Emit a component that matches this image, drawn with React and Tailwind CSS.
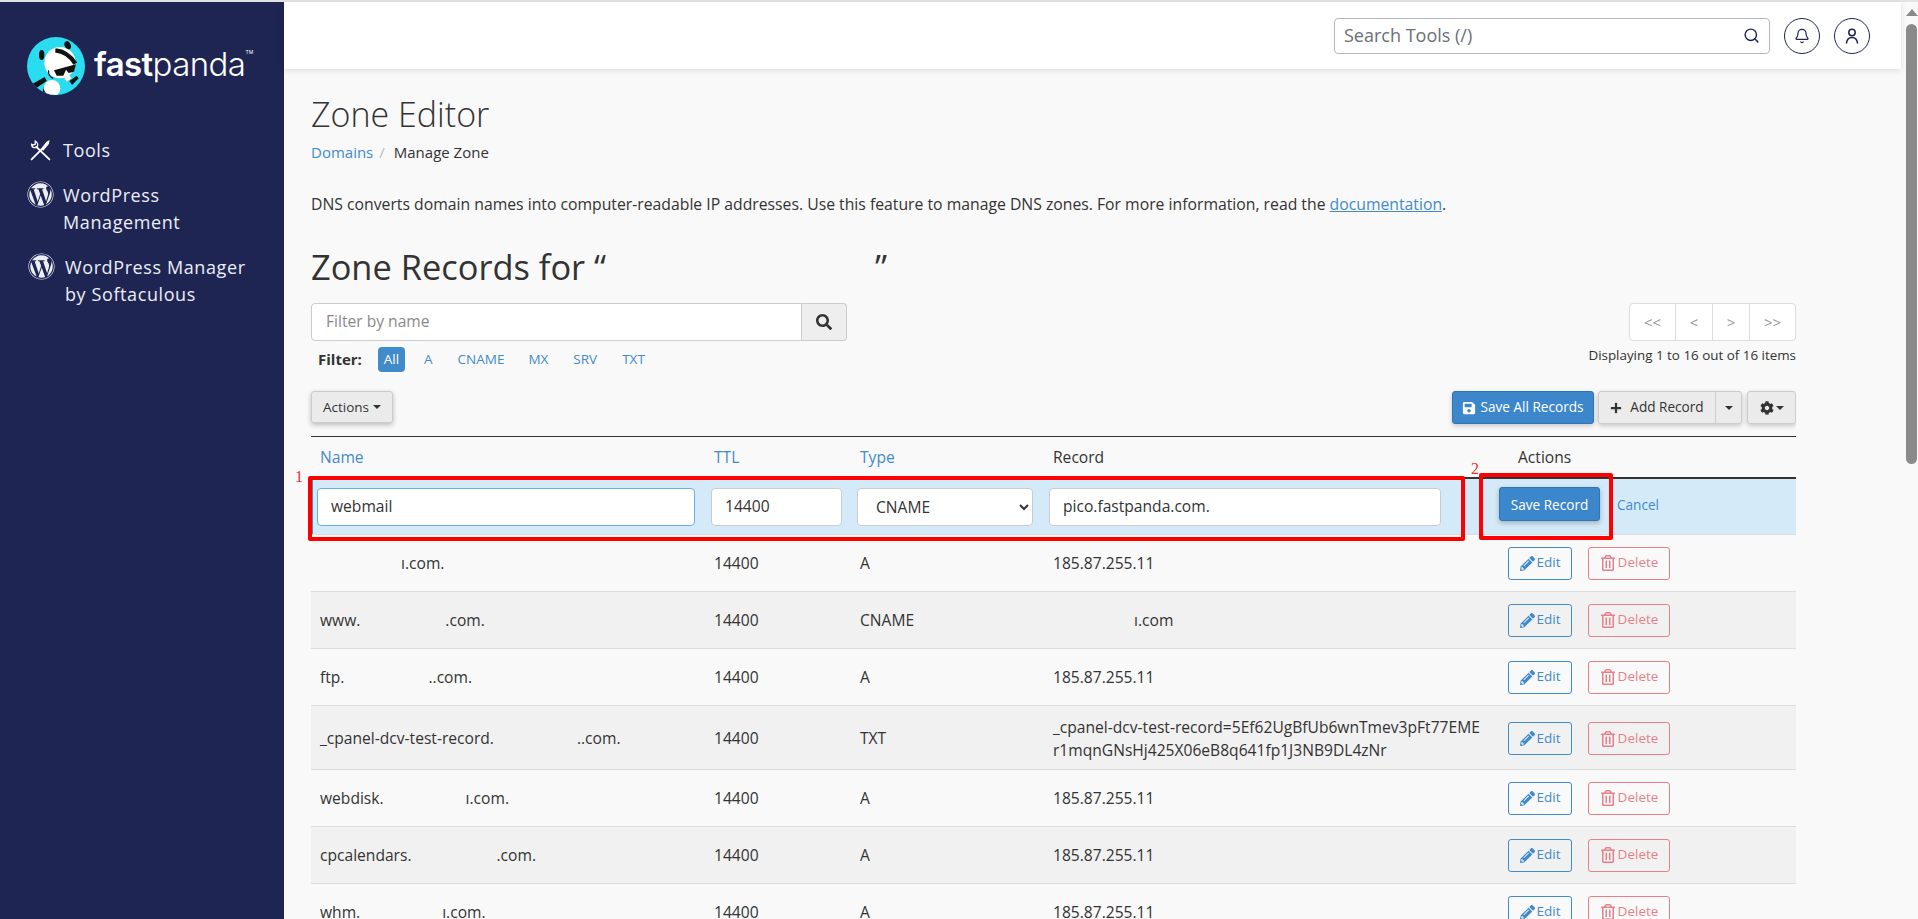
import { Bell, Search } from 'lucide-react';
import { FaCog, FaPencilAlt, FaPlus, FaRegTrashAlt, FaSave, FaSearch, FaWordpress } from 'react-icons/fa';

const rows = [
    { prefix: '', gap: 'ml-[81px]', rest: 'ı.com.', ttl: '14400', type: 'A', record: '185.87.255.11' },
    { prefix: 'www.', gap: 'ml-[85px]', rest: '.com.', ttl: '14400', type: 'CNAME', record: '', recordTail: 'ı.com' },
    { prefix: 'ftp.', gap: 'ml-[84px]', rest: '..com.', ttl: '14400', type: 'A', record: '185.87.255.11' },
    { prefix: '_cpanel-dcv-test-record.', gap: 'ml-[83px]', rest: '..com.', ttl: '14400', type: 'TXT', txt: true },
    { prefix: 'webdisk.', gap: 'ml-[82px]', rest: 'ı.com.', ttl: '14400', type: 'A', record: '185.87.255.11' },
    { prefix: 'cpcalendars.', gap: 'ml-[85px]', rest: '.com.', ttl: '14400', type: 'A', record: '185.87.255.11' },
    { prefix: 'whm.', gap: 'ml-[82px]', rest: 'ı.com.', ttl: '14400', type: 'A', record: '185.87.255.11' },
];

const Logo = () => (
    <svg viewBox="23 18 174 174" className="w-[58px] h-[58px] shrink-0">
        <defs>
            <clipPath id="logo-clip">
                <circle cx="110" cy="105" r="87" />
            </clipPath>
        </defs>
        <circle cx="110" cy="105" r="87" fill="#2adcf0" />
        <g clipPath="url(#logo-clip)">
            <ellipse cx="67" cy="72" rx="8" ry="15" fill="#111" />
            <ellipse cx="145" cy="43" rx="9" ry="13" fill="#111" transform="rotate(-25 145 43)" />
            <ellipse cx="122" cy="95" rx="47" ry="47" fill="#fff" />
            <path d="M108 58 C130 60 152 72 168 98" stroke="#111" strokeWidth="13" fill="none" />
            <path d="M104 118 L170 100 L164 122 L148 126 L140 116 L132 134 L112 134 Z" fill="#111" />
            <path d="M132 135 L146 126 L156 142 L142 152 Z" fill="#fff" />
            <path d="M88 118 C86 128 92 138 102 142" stroke="#111" strokeWidth="4" fill="none" />
            <path d="M40 158 L76 138 L82 150 L50 172 Z" fill="#111" />
            <path d="M150 150 L172 134 L178 142 L158 162 Z" fill="#111" />
            <circle cx="98" cy="172" r="25" fill="#fff" />
            <path d="M72 168 Q76 190 92 196 L70 196 Z" fill="#111" />
        </g>
    </svg>
);

const ToolsIcon = () => (
    <svg viewBox="0 0 20 20" className="w-[21px] h-[21px] shrink-0" fill="none" stroke="#fff" strokeLinecap="round">
        <path d="M6 6.5 L18.5 18.5" strokeWidth="1.8" />
        <path d="M1.5 4 C1.5 7 4 8 6.5 6.8 C8 5 7.5 2.4 5 1 L5 4 L3 4.8 Z" strokeWidth="1.2" />
        <path d="M1.5 18.5 L11.5 8.5" strokeWidth="1.8" />
        <path d="M11 8.5 L16 2 L18 1 L17.5 3.5 L12.5 9.5 Z" fill="#fff" strokeWidth="1" />
    </svg>
);

const UserIcon = () => (
    <svg viewBox="0 0 14 16" className="w-[14px] h-[16px]" fill="none" stroke="#1f2553" strokeWidth="1.5" strokeLinecap="round">
        <circle cx="7" cy="4.5" r="3.2" />
        <path d="M1.5 15 C2 11 4.5 9.5 7 9.5 C9.5 9.5 12 11 12.5 15" />
    </svg>
);

const Caret = ({ className = '' }) => (
    <span className={`inline-block w-0 h-0 border-x-[4px] border-x-transparent border-t-[4px] border-t-current ${className}`} />
);

const RowActions = () => (
    <div className="flex items-center pl-[9px] gap-[16px]">
        <button className="w-[64px] h-[33px] flex items-center justify-center gap-[2px] rounded-[3px] border border-[#428bca] text-[#428bca] text-[13.5px] leading-none">
            <FaPencilAlt className="text-[15px]" />
            Edit
        </button>
        <button className="w-[82px] h-[33px] flex items-center justify-center gap-[2px] rounded-[3px] border border-[#e8808a] text-[#e8808a] text-[13.5px] leading-none">
            <FaRegTrashAlt className="text-[16px]" />
            Delete
        </button>
    </div>
);

export default function App() {
    return (
        <div className="w-[1918px] h-[919px] overflow-hidden flex flex-col bg-[#f9f9f9] text-[#333] font-['Open_Sans',sans-serif]">
            <div className="h-[2px] shrink-0 bg-[#e3e3e3]" />
            <div className="flex flex-1 min-h-0">
                <aside className="w-[284px] shrink-0 bg-[#1f2553] text-[#eceef4] text-[18px] leading-[27px] tracking-[0.6px] pl-[27px] pt-[35px]">
                    <div className="flex items-center gap-[9px] h-[58px]">
                        <Logo />
                        <div className="relative text-white text-[33px] leading-none font-['Inter',sans-serif] tracking-[-0.6px] -mt-[3px]">
                            <span className="font-semibold">fast</span>
                            <span className="font-light">panda</span>
                            <span className="absolute -right-[8px] top-[2px] text-[5px] tracking-normal">TM</span>
                        </div>
                    </div>
                    <nav className="mt-[42px] flex flex-col">
                        <div className="flex items-center gap-[12px] pl-[3px] h-[27px]">
                            <ToolsIcon />
                            <span>Tools</span>
                        </div>
                        <div className="flex gap-[9px] mt-[18px]">
                            <FaWordpress className="text-[27px] shrink-0 mt-[-1px]" />
                            <span>WordPress<br />Management</span>
                        </div>
                        <div className="flex gap-[10px] mt-[18px] pl-[1px]">
                            <FaWordpress className="text-[27px] shrink-0 mt-[-1px]" />
                            <span>WordPress Manager<br />by Softaculous</span>
                        </div>
                    </nav>
                </aside>

                <div className="flex-1 min-w-0 flex flex-col">
                    <header className="h-[67px] shrink-0 bg-white shadow-[0_2px_6px_rgba(0,0,0,0.1)] flex items-center justify-end pr-[31px] gap-[14px] relative">
                        <div className="w-[436px] h-[36px] rounded-[4px] border border-[#b5b5c8] flex items-center justify-between pl-[9px] pr-[9px] text-[18px] text-[#6a6f78]">
                            <span>Search Tools (/)</span>
                            <Search size={17} color="#1f2553" strokeWidth={2} />
                        </div>
                        <div className="w-[36px] h-[36px] rounded-full border border-[#1f2553] flex items-center justify-center">
                            <Bell size={16} color="#1f2553" strokeWidth={1.8} />
                        </div>
                        <div className="w-[36px] h-[36px] rounded-full border border-[#1f2553] flex items-center justify-center">
                            <UserIcon />
                        </div>
                    </header>

                    <main className="flex-1 min-h-0 overflow-hidden pl-[27px] w-[1512px]">
                        <h1 className="mt-[25px] text-[34px] leading-[40px] font-light">Zone Editor</h1>
                        <div className="mt-[8px] h-[20px] flex items-center text-[15px] leading-[20px]">
                            <span className="text-[#428bca]">Domains</span>
                            <span className="text-[#bbb] ml-[6px] mr-[9px]">/</span>
                            <span>Manage Zone</span>
                        </div>
                        <p className="mt-[32px] text-[15.75px] leading-[20px]">
                            DNS converts domain names into computer-readable IP addresses. Use this feature to manage DNS zones. For more information, read the{' '}
                            <span className="text-[#428bca] underline">documentation</span>.
                        </p>
                        <h2 className="mt-[33px] h-[40px] text-[34.4px] leading-[40px] font-medium flex">
                            <span>Zone Records for “</span>
                            <span className="w-[269px]" />
                            <span>”</span>
                        </h2>

                        <div className="mt-[16px] flex justify-between items-start w-[1485px]">
                            <div>
                                <div className="w-[536px] h-[38px] flex">
                                    <div className="flex-1 bg-white border border-[#ccc] rounded-l-[4px] pl-[14px] flex items-center text-[15.6px] text-[#8a8a8a]">Filter by name</div>
                                    <div className="w-[45px] bg-[#eee] border border-l-0 border-[#ccc] rounded-r-[4px] flex items-center justify-center">
                                        <FaSearch className="text-[16px] text-[#333]" />
                                    </div>
                                </div>
                                <div className="mt-[6px] h-[25px] pl-[7px] flex items-center text-[13.5px] text-[#428bca]">
                                    <span className="font-bold text-[#333] w-[60px] text-[15px]">Filter:</span>
                                    <span className="w-[27px] h-[25px] rounded-[4px] bg-[#428bca] text-white flex items-center justify-center">All</span>
                                    <span className="ml-[19px]">A</span>
                                    <span className="ml-[25px]">CNAME</span>
                                    <span className="ml-[24px]">MX</span>
                                    <span className="ml-[25px]">SRV</span>
                                    <span className="ml-[25px]">TXT</span>
                                </div>
                            </div>
                            <div className="flex flex-col items-end">
                                <div className="w-[167px] h-[38px] flex rounded-[4px] border border-[#ddd] bg-white text-[#999] text-[15px] divide-x divide-[#ddd]">
                                    <span className="w-[46px] flex items-center justify-center">&lt;&lt;</span>
                                    <span className="w-[37px] flex items-center justify-center">&lt;</span>
                                    <span className="w-[37px] flex items-center justify-center">&gt;</span>
                                    <span className="flex-1 flex items-center justify-center">&gt;&gt;</span>
                                </div>
                                <div className="mt-[5px] text-[13.4px] leading-[18px]">Displaying 1 to 16 out of 16 items</div>
                            </div>
                        </div>

                        <div className="mt-[19px] w-[1485px] flex justify-between items-start">
                            <button className="w-[82px] h-[32px] rounded-[3px] border border-[#ccc] bg-[#ebebeb] shadow-[0_2px_5px_rgba(0,0,0,0.25)] flex items-center justify-center gap-[4px] text-[13.5px]">
                                Actions <Caret />
                            </button>
                            <div className="flex gap-[4px] text-[13.6px]">
                                <button className="w-[142px] h-[33px] rounded-[3px] bg-[#3c87cc] border border-[#2f74b5] text-white shadow-[0_2px_5px_rgba(0,0,0,0.2)] flex items-center justify-center gap-[4px]">
                                    <FaSave className="text-[14px]" /> Save All Records
                                </button>
                                <div className="w-[144px] h-[33px] rounded-[3px] border border-[#ccc] bg-[#ebebeb] shadow-[0_2px_5px_rgba(0,0,0,0.2)] flex">
                                    <div className="w-[117px] flex items-center justify-center gap-[8px] border-r border-[#ccc]">
                                        <FaPlus className="text-[12px]" /> Add Record
                                    </div>
                                    <div className="flex-1 flex items-center justify-center"><Caret /></div>
                                </div>
                                <div className="ml-[1px] w-[49px] h-[33px] rounded-[3px] border border-[#ccc] bg-[#ebebeb] shadow-[0_2px_5px_rgba(0,0,0,0.2)] flex items-center justify-center gap-[2px]">
                                    <FaCog className="text-[14px]" /> <Caret />
                                </div>
                            </div>
                        </div>

                        <div className="relative mt-[12px] w-[1485px] text-[15.6px] leading-[23px]">
                            <div className="grid grid-cols-[393px_146px_193px_456px_297px] h-[40px] items-center border-t border-[#333] border-b-2 border-b-[#333] box-content">
                                <span className="pl-[9px] text-[#428bca]">Name</span>
                                <span className="pl-[10px] text-[#428bca]">TTL</span>
                                <span className="pl-[10px] text-[#428bca]">Type</span>
                                <span className="pl-[10px]">Record</span>
                                <span className="pl-[19px]">Actions</span>
                            </div>

                            <div className="grid grid-cols-[393px_146px_193px_456px_297px] h-[56px] items-center bg-[#d4eaf8] border-b border-[#ddd] shadow-[inset_2px_0_0_#428bca] box-border">
                                <div className="pl-[6px]">
                                    <div className="w-[378px] h-[38px] bg-white rounded-[4px] border border-[#66afe9] pl-[13px] flex items-center">webmail</div>
                                </div>
                                <div className="pl-[7px]">
                                    <div className="w-[131px] h-[38px] bg-white rounded-[4px] border border-[#ccc] pl-[13px] flex items-center">14400</div>
                                </div>
                                <div className="pl-[7px]">
                                    <select defaultValue="CNAME" className="w-[176px] h-[38px] bg-white rounded-[4px] border border-[#ccc] pl-[14px]">
                                        <option>A</option>
                                        <option>CNAME</option>
                                        <option>MX</option>
                                        <option>SRV</option>
                                        <option>TXT</option>
                                    </select>
                                </div>
                                <div className="pl-[6px]">
                                    <div className="w-[392px] h-[38px] bg-white rounded-[4px] border border-[#ccc] pl-[13px] flex items-center">pico.fastpanda.com.</div>
                                </div>
                                <div className="flex items-center self-start mt-[8px]">
                                    <button className="w-[101px] h-[34px] rounded-[3px] bg-[#3c87cc] border border-[#2f74b5] text-white text-[13.6px] shadow-[0_2px_5px_rgba(0,0,0,0.25)]">Save Record</button>
                                    <span className="ml-[17px] text-[13.6px] text-[#428bca]">Cancel</span>
                                </div>
                            </div>

                            {rows.map((row, i) => (
                                <div
                                    key={i}
                                    className={`grid grid-cols-[393px_146px_193px_456px_297px] items-center border-b border-[#ddd] ${row.txt ? 'h-[64px] pt-[2px]' : 'h-[57px]'} ${i % 2 ? 'bg-[#f1f1f1]' : 'bg-[#f9f9f9]'}`}
                                >
                                    <div className="pl-[9px] whitespace-nowrap">
                                        {row.prefix}
                                        <span className={`inline-block ${row.gap}`}>{row.rest}</span>
                                    </div>
                                    <div className="pl-[10px]">{row.ttl}</div>
                                    <div className="pl-[10px]">{row.type}</div>
                                    <div className="pl-[10px] whitespace-nowrap">
                                        {row.txt ? (
                                            <>
                                                _cpanel-dcv-test-record=5Ef62UgBfUb6wnTmev3pFt77EME
                                                <br />
                                                r1mqnGNsHj425X06eB8q641fp1J3NB9DL4zNr
                                            </>
                                        ) : row.recordTail ? (
                                            <span className="ml-[81px]">{row.recordTail}</span>
                                        ) : (
                                            row.record
                                        )}
                                    </div>
                                    <RowActions />
                                </div>
                            ))}

                            {/* annotation boxes drawn over the screenshot */}
                            <div className="absolute left-[-3px] top-[40px] w-[1157px] h-[65px] border-4 border-[#f00] rounded-[2px]" />
                            <div className="absolute left-[1168px] top-[37px] w-[134px] h-[67px] border-4 border-[#f00] rounded-[2px]" />
                            <span className="absolute left-[-16px] top-[31px] text-[16px] leading-[20px] text-[#e33] font-['Liberation_Serif',serif]">1</span>
                            <span className="absolute left-[1160px] top-[23px] text-[16px] leading-[20px] text-[#e33] font-['Liberation_Serif',serif]">2</span>
                        </div>
                    </main>
                </div>

                <div className="w-[17px] shrink-0 flex flex-col items-center pt-[7px]">
                    <span className="w-0 h-0 border-x-[6px] border-x-transparent border-b-[7px] border-b-[#8a8a8a] ml-[4px]" />
                    <div className="mt-[8px] w-[11px] h-[440px] ml-[4px] rounded-full bg-[#8a8a8a]" />
                </div>
            </div>
        </div>
    );
}
